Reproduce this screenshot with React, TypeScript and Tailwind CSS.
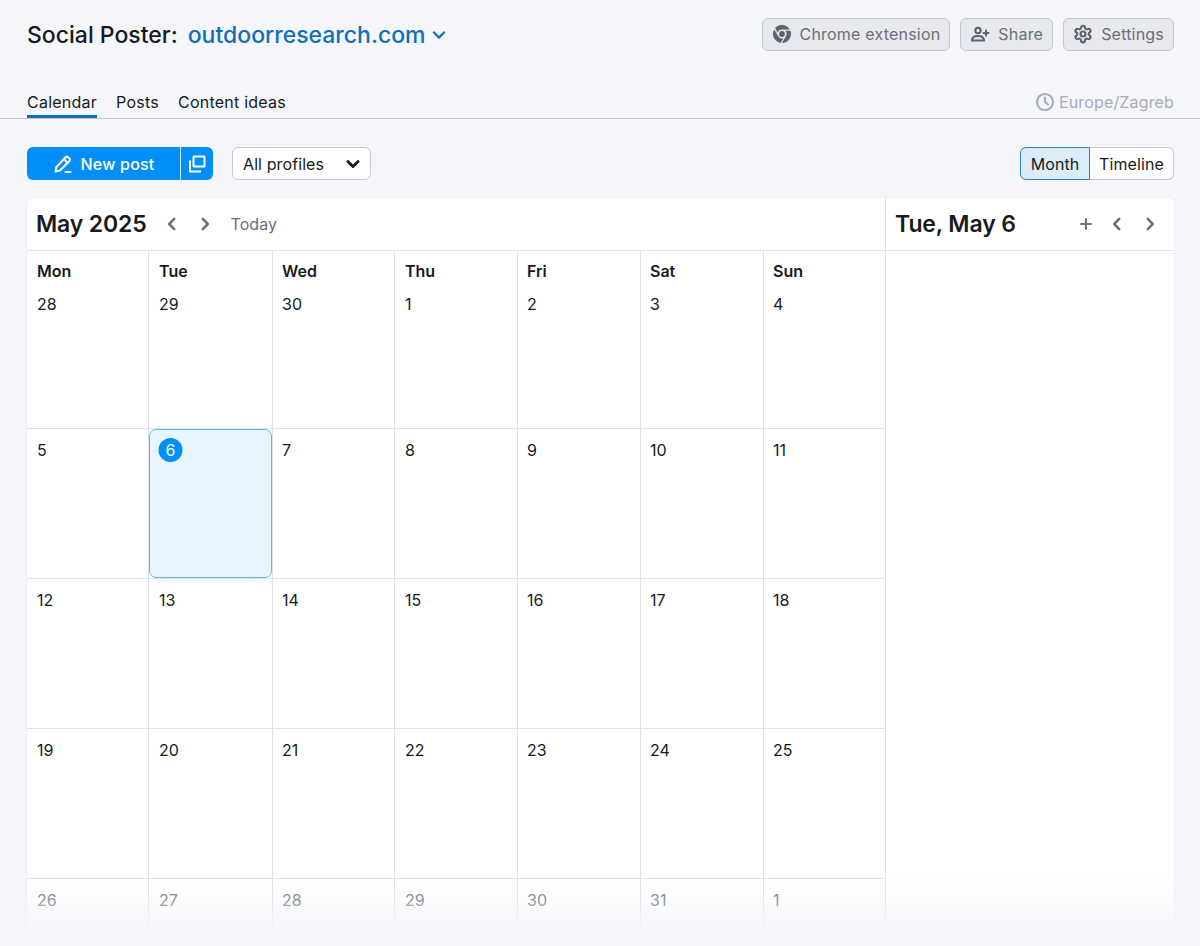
import React from "react";

const ChromeIcon = () => (
  <svg width="20" height="20" viewBox="0 0 20 20" fill="#5f616c">
    <path d="M10 1a9 9 0 0 1 7.8 4.5H10a4.5 4.5 0 0 0-4.3 3.2L3.1 4.1A9 9 0 0 1 10 1Z" />
    <path d="M2.3 5.4 6.2 12.2A4.5 4.5 0 0 0 11.300 14.400L8.700 18.900A9 9 0 0 1 2.300 5.400Z" />
    <path d="M18.400 6.800A9 9 0 0 1 10 19L13.900 12.200A4.500 4.500 0 0 0 13.300 6.800Z" />
    <circle cx="10" cy="10" r="2.900" />
  </svg>
);

const ShareIcon = () => (
  <svg width="20" height="20" viewBox="0 0 20 20" fill="none" stroke="#5f616c" strokeWidth="2" strokeLinecap="round" strokeLinejoin="round">
    <circle cx="8" cy="6.500" r="2.700" />
    <path d="M2 16.500c0-3 2.500-4.500 6-4.500s6 1.500 6 4.500H2Z" />
    <path d="M16 6.500v5M13.500 9h5" />
  </svg>
);

const GearIcon = () => (
  <svg width="20" height="20" viewBox="0 0 24 24" fill="none" stroke="#5f616c" strokeWidth="2.500" strokeLinecap="round" strokeLinejoin="round">
    <path d="M12.220 2h-.44a2 2 0 0 0-2 2v.18a2 2 0 0 1-1 1.730l-.43.250a2 2 0 0 1-2 0l-.15-.080a2 2 0 0 0-2.730.730l-.22.380a2 2 0 0 0 .730 2.730l.15.100a2 2 0 0 1 1 1.720v.510a2 2 0 0 1-1 1.740l-.15.090a2 2 0 0 0-.730 2.730l.22.380a2 2 0 0 0 2.730.730l.15-.080a2 2 0 0 1 2 0l.43.250a2 2 0 0 1 1 1.730V20a2 2 0 0 0 2 2h.44a2 2 0 0 0 2-2v-.18a2 2 0 0 1 1-1.730l.43-.250a2 2 0 0 1 2 0l.15.080a2 2 0 0 0 2.730-.730l.22-.390a2 2 0 0 0-.730-2.730l-.15-.080a2 2 0 0 1-1-1.740v-.500a2 2 0 0 1 1-1.740l.15-.090a2 2 0 0 0 .730-2.730l-.22-.380a2 2 0 0 0-2.730-.730l-.15.080a2 2 0 0 1-2 0l-.43-.250a2 2 0 0 1-1-1.730V4a2 2 0 0 0-2-2Z" />
    <circle cx="12" cy="12" r="3" />
  </svg>
);

const ClockIcon = () => (
  <svg width="20" height="20" viewBox="0 0 20 20" fill="none" stroke="#a9abb6" strokeWidth="2.200" strokeLinecap="round" strokeLinejoin="round">
    <circle cx="10" cy="10" r="8" />
    <path d="M10 5.500V10l3 2.500" />
  </svg>
);

const PencilIcon = () => (
  <svg width="20" height="20" viewBox="0 0 20 20" fill="none" stroke="#ffffff" strokeWidth="2" strokeLinecap="round" strokeLinejoin="round">
    <path d="M2.500 17.500l.8-4.300L12.600 3.200a1.800 1.800 0 0 1 2.500 0l1.300 1.300a1.800 1.800 0 0 1 0 2.500L7 16.500l-4.500 1Z" />
    <path d="M10.800 5l4 4M12.500 18h5" />
  </svg>
);

const CopyIcon = () => (
  <svg width="18" height="18" viewBox="0 0 18 18" fill="none" stroke="#ffffff" strokeWidth="2" strokeLinejoin="round">
    <rect x="5.500" y="1.500" width="11" height="10" rx="0.500" />
    <path d="M2 5.500v11h11" />
  </svg>
);

const Chevron = ({ dir, color = "#6c6e79", size = 18, sw = 2.200 }: { dir: "l" | "r" | "d"; color?: string; size?: number; sw?: number }) => (
  <svg width={size} height={size} viewBox="0 0 16 16" fill="none" stroke={color} strokeWidth={sw} strokeLinecap="round" strokeLinejoin="round">
    {dir === "l" && <path d="M10 3.500 5.500 8l4.500 4.500" />}
    {dir === "r" && <path d="M6 3.500 10.500 8 6 12.500" />}
    {dir === "d" && <path d="M3.500 5.800 8 10.300l4.500-4.500" />}
  </svg>
);

const HeaderButton = ({ icon, label }: { icon: React.ReactNode; label: string }) => (
  <button className="flex h-[33px] items-center gap-2 rounded-md border border-[#c4c7cf] bg-[#e7e9ee] px-[9px] pb-px text-[16px] tracking-[0.2px] text-[#6c6e79]">
    {icon}
    <span>{label}</span>
  </button>
);

const weekdays = ["Mon", "Tue", "Wed", "Thu", "Fri", "Sat", "Sun"];
const weeks: string[][] = [
  ["28", "29", "30", "1", "2", "3", "4"],
  ["5", "6", "7", "8", "9", "10", "11"],
  ["12", "13", "14", "15", "16", "17", "18"],
  ["19", "20", "21", "22", "23", "24", "25"],
  ["26", "27", "28", "29", "30", "31", "1"],
];
const colPad = ["pl-[10px]", "pl-[10px]", "pl-[9px]", "pl-[10px]", "pl-[9px]", "pl-[9px]", "pl-[9px]"];

export default function App() {
  return (
    <div className="relative h-[946px] w-[1200px] overflow-hidden bg-[#f4f6fa] font-['Inter',sans-serif] text-[#181a20]">
      <header className="flex h-[69px] items-start justify-between pl-[27px] pr-[26px] pt-[18px]">
        <div className="flex h-[33px] items-center pt-px text-[23px] font-medium">
          <span>Social Poster:</span>
          <span className="ml-[10px] text-[#0f6fb8]">outdoorresearch.com</span>
          <span className="ml-[4px]"><Chevron dir="d" color="#0f6fb8" size={18} sw={2} /></span>
        </div>
        <div className="flex gap-[10px]">
          <HeaderButton icon={<ChromeIcon />} label="Chrome extension" />
          <HeaderButton icon={<ShareIcon />} label="Share" />
          <HeaderButton icon={<GearIcon />} label="Settings" />
        </div>
      </header>

      <nav className="flex h-[50px] items-end justify-between border-b border-[#c4c7cf] pl-[27px] pr-[26px]">
        <div className="flex gap-[19px] text-[16px] tracking-[0.24px]">
          <div className="-mb-px h-[33px] border-b-[3px] border-[#0f6fb8] pt-[7px] leading-[20px]">Calendar</div>
          <div className="h-[33px] pt-[7px] leading-[20px]">Posts</div>
          <div className="h-[33px] pt-[7px] leading-[20px]">Content ideas</div>
        </div>
        <div className="flex h-[33px] items-start gap-[4px] pt-[7px] text-[16px] leading-[20px] tracking-[0.15px] text-[#a9abb6]">
          <ClockIcon />
          <span>Europe/Zagreb</span>
        </div>
      </nav>

      <div className="flex items-center justify-between pl-[27px] pr-[26px] pt-[28px]">
        <div className="flex items-center gap-[19px]">
          <div className="flex h-[33px] w-[186px] overflow-hidden rounded-md bg-[#008ff8] text-white">
            <button className="flex w-[154px] items-center justify-center gap-[8px] border-r border-[#d5ecfd] text-[16px] font-medium tracking-[0.2px]">
              <PencilIcon />
              <span>New post</span>
            </button>
            <button className="flex flex-1 items-center justify-center">
              <CopyIcon />
            </button>
          </div>
          <button className="flex h-[33px] w-[139px] items-center justify-between rounded-md border border-[#c4c7cf] bg-white pl-[10px] pr-[8px] text-[16px] tracking-[0.1px]">
            <span>All profiles</span>
            <Chevron dir="d" color="#181a20" size={18} sw={2.500} />
          </button>
        </div>
        <div className="flex h-[33px] text-[16px] tracking-[0.1px]">
          <div className="flex w-[70px] items-center justify-center rounded-l-md border border-[#2f7fbb] bg-[#dbecfa]">Month</div>
          <div className="flex w-[84px] items-center justify-center rounded-r-md border border-l-0 border-[#c4c7cf] bg-white">Timeline</div>
        </div>
      </div>

      <main className="relative ml-[27px] mt-[18px] flex h-[732px] w-[1147px] rounded-t-md bg-white shadow-[0_0_0_1px_#eef0f4]">
        <section className="w-[859px] border-r border-[#e0e2e8]">
          <div className="flex h-[53px] items-center border-b border-[#e0e2e8] pl-[9px]">
            <h1 className="text-[23px] font-semibold tracking-[-0.15px]">May 2025</h1>
            <span className="ml-[17px]"><Chevron dir="l" /></span>
            <span className="ml-[15px]"><Chevron dir="r" /></span>
            <span className="ml-[16px] text-[16px] tracking-[0.1px] text-[#6c6e79]">Today</span>
          </div>
          <div className="grid grid-cols-[122px_124px_122px_123px_123px_123px_121px]">
            {weeks.map((week, w) =>
              week.map((day, d) => {
                const selected = w === 1 && d === 1;
                return (
                  <div
                    key={`${w}-${d}`}
                    className={`border-[#e0e2e8] ${colPad[d]} ${d < 6 ? "border-r" : ""} ${w === 0 ? "h-[178px] border-b" : w < 4 ? "h-[150px] border-b" : "h-[51px]"} ${selected ? "relative" : ""}`}
                  >
                    {w === 0 && <div className="pt-[10px] text-[16px] font-semibold leading-[20px]">{weekdays[d]}</div>}
                    {selected && (
                      <div className="absolute inset-0 rounded-[7px] border border-[#62b7ea] bg-[#e6f5fe]" />
                    )}
                    <div className={w === 0 ? "pt-[13px]" : selected ? "pt-[9px]" : "pt-[11px]"}>
                      {selected ? (
                        <span className="relative flex h-6 w-6 -translate-x-[0.5px] items-center justify-center rounded-full bg-[#008ff8] text-[16px] text-white">{day}</span>
                      ) : (
                        <span className={`block text-[16px] leading-[20px] ${w === 4 ? "text-[#6c6e79]" : ""}`}>{day}</span>
                      )}
                    </div>
                  </div>
                );
              })
            )}
          </div>
        </section>
        <aside className="flex-1">
          <div className="flex h-[53px] items-center justify-between border-b border-[#e0e2e8] pl-[9px] pr-[15px]">
            <h2 className="text-[23px] font-semibold tracking-[-0.1px]">Tue, May 6</h2>
            <div className="flex items-center">
              <svg width="16" height="16" viewBox="0 0 16 16" fill="none" stroke="#6c6e79" strokeWidth="2" strokeLinecap="round">
                <path d="M8 3v10M3 8h10" />
              </svg>
              <span className="ml-[14px]"><Chevron dir="l" /></span>
              <span className="ml-[15px]"><Chevron dir="r" /></span>
            </div>
          </div>
        </aside>
        <div className="pointer-events-none absolute -inset-x-px -bottom-px h-[58px] bg-gradient-to-b from-[#f4f6fa00] via-[#f4f6fa40] via-[45%] to-[#f4f6fa]" />
      </main>
    </div>
  );
}
